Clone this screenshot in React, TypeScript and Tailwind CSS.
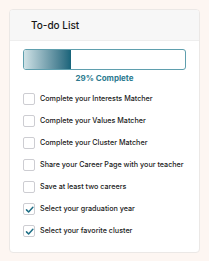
const tasks = [
  { label: "Complete your Interests Matcher", done: false },
  { label: "Complete your Values Matcher", done: false },
  { label: "Complete your Cluster Matcher", done: false },
  { label: "Share your Career Page with your teacher", done: false },
  { label: "Save at least two careers", done: false },
  { label: "Select your graduation year", done: true },
  { label: "Select your favorite cluster", done: true },
];

function Check() {
  return (
    <svg width="9" height="9" viewBox="0 0 12 12" fill="none">
      <path d="M2 6.5l2.8 2.8L10.5 3" stroke="#1f6f86" strokeWidth="2" strokeLinecap="round" strokeLinejoin="round" />
    </svg>
  );
}

export default function App() {
  const pct = 29;
  return (
    <div className="min-h-[261px] w-[209px] bg-[#fdf6f2] px-[9px] pt-[9px] font-['Inter',sans-serif]">
      <div className="flex h-[244px] flex-col overflow-hidden rounded-[4px] border border-[#ebe8e6] bg-white">
        <div className="flex h-[31px] items-center border-b border-[#eeeeee] bg-[#f7f7f7] pl-[21px] text-[10px] font-medium text-[#161616]">
          To-do List
        </div>
        <div className="px-[13px] pt-[8px]">
          <div className="h-[21px] w-[163px] overflow-hidden rounded-[3px] border border-[#5f9fae] bg-white">
            <div
              className="h-full bg-gradient-to-r from-[#cfe2e6] to-[#16647a]"
              style={{ width: `${pct}%` }}
            />
          </div>
          <div className="mt-[2px] text-center text-[8px] font-bold leading-[12px] text-[#2b7a8f]">
            {pct}% Complete
          </div>
          <ul className="mt-[9px] flex flex-col gap-[10px]">
            {tasks.map((t) => (
              <li key={t.label} className="flex h-[12px] items-center gap-[5px]">
                <span className="flex h-[12px] w-[12px] shrink-0 items-center justify-center rounded-[2px] border border-[#cdcdd2] bg-white">
                  {t.done && <Check />}
                </span>
                <span className="whitespace-nowrap text-[7.2px] font-medium text-[#1a1a1a]">{t.label}</span>
              </li>
            ))}
          </ul>
        </div>
      </div>
    </div>
  );
}
